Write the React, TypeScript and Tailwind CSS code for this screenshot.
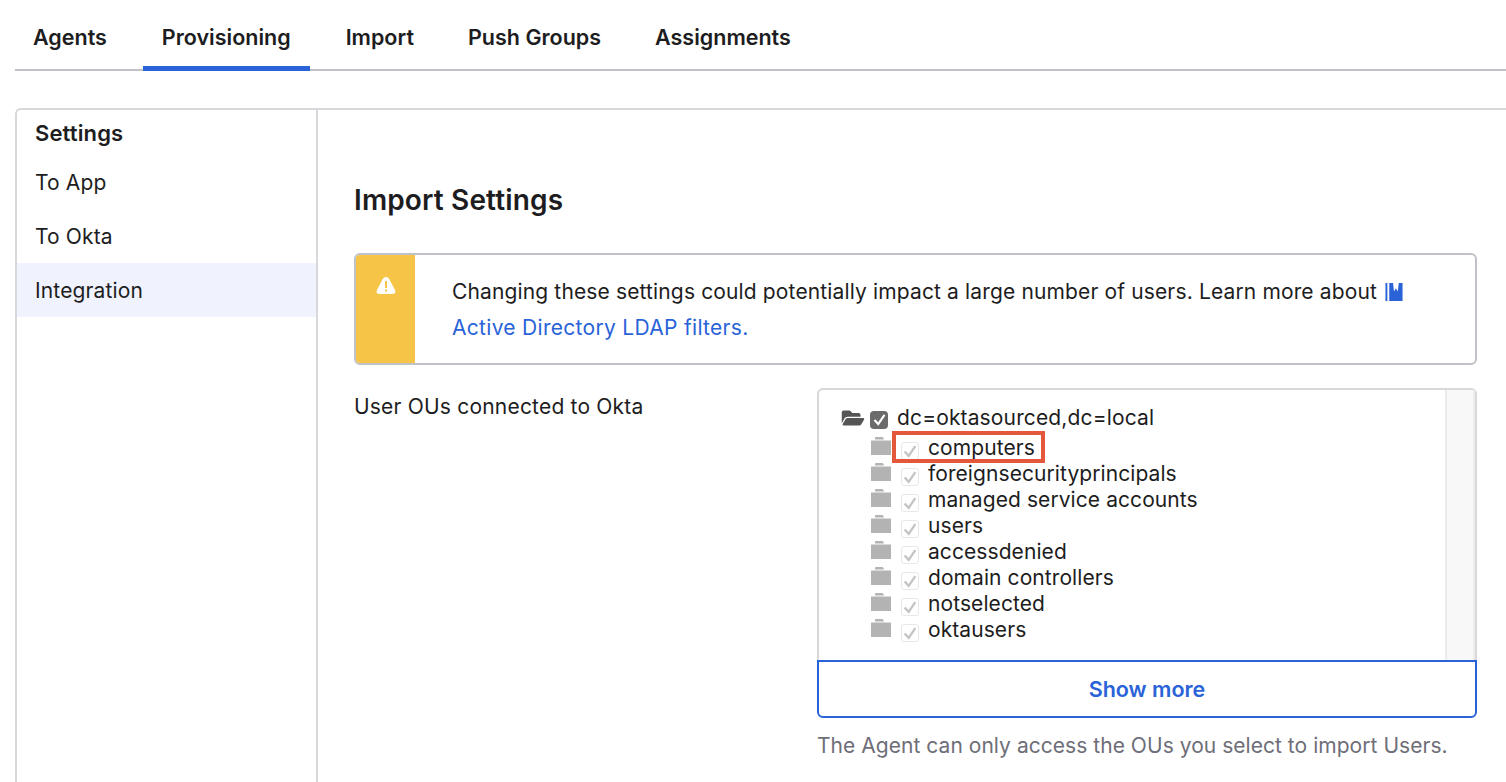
import { FaFolderOpen } from "react-icons/fa";

const tabs = ["Agents", "Provisioning", "Import", "Push Groups", "Assignments"];
const ous = [
  "computers",
  "foreignsecurityprincipals",
  "managed service accounts",
  "users",
  "accessdenied",
  "domain controllers",
  "notselected",
  "oktausers",
];

const Check = ({ className }: { className: string }) => (
  <svg viewBox="0 0 18 18" className={className} fill="none" stroke="currentColor" strokeWidth="2.6">
    <path d="M3 9.5 L7.5 14.5 L15 3.5" />
  </svg>
);

const ClosedFolder = () => (
  <svg viewBox="0 0 20 18" className="w-5 h-[18px] shrink-0" fill="#b3b3b3">
    <path d="M4 1 Q4 0 5 0 H11 Q12 0 12.5 1 L13 2.5 H4 Z" />
    <rect x="0" y="3.5" width="20" height="14.5" />
  </svg>
);

const App = () => {
  return (
    <div className="h-[782px] w-[1506px] overflow-hidden bg-white font-['Inter',sans-serif] text-[21px] tracking-[0.14px] text-[#1d1d21]">
      {/* Tabs */}
      <div className="ml-[15px] flex h-[71px] gap-[18px] border-b-2 border-[#c1c1c8]">
        {tabs.map((tab) => (
          <div
            key={tab}
            className={
              tab === "Provisioning"
                ? "h-[71px] border-b-[5px] border-[#2a63d8] px-[19px] pt-[21px] text-[21.5px] leading-[32px] font-semibold tracking-normal"
                : "h-[71px] px-[18px] pt-[21px] text-[21.5px] leading-[32px] font-semibold tracking-normal"
            }
          >
            {tab}
          </div>
        ))}
      </div>

      {/* Panel */}
      <div className="mt-[37px] ml-[15px] flex h-[700px] rounded-tl-md border-t-2 border-l-2 border-[#d7d7dc]">
        <div className="w-[301px] shrink-0 border-r-2 border-[#d7d7dc]">
          <div className="pt-[9px] pl-[18px] text-[22px] leading-[28px] font-semibold">Settings</div>
          <div className="mt-[8px] flex h-[54px] items-center pt-[1px] pl-[18px]">To App</div>
          <div className="flex h-[54px] items-center pt-[1px] pl-[18px]">To Okta</div>
          <div className="flex h-[54px] items-center bg-[#f0f3fd] pt-[1px] pl-[18px]">Integration</div>
        </div>

        <div className="w-[1123px] shrink-0 pl-[36px]">
          <h2 className="mt-[72px] text-[28px] leading-[36px] font-semibold">Import Settings</h2>

          {/* Warning */}
          <div className="mt-[35px] flex h-[112px] w-[1123px] overflow-hidden rounded-md border-2 border-[#c1c1c8]">
            <div className="flex w-[59px] shrink-0 justify-center bg-[#f6c548] pt-[22px]">
              <svg viewBox="0 0 20 18" className="h-[18px] w-5">
                <path d="M10 0 C12 0 13 1.5 14 3.5 L19 13 C20.2 15.5 19 17 16 17 H4 C1 17 -.2 15.5 1 13 L6 3.5 C7 1.5 8 0 10 0 Z" fill="#fff" />
                <rect x="9" y="4" width="2" height="7" fill="#f6c548" />
                <rect x="9" y="12.5" width="2" height="2" fill="#f6c548" />
              </svg>
            </div>
            <div className="pt-[19px] pl-[37px] leading-[36px]">
              <div className="flex items-center">
                Changing these settings could potentially impact a large number of users. Learn more about
                <svg viewBox="0 0 18 20" className="ml-[8px] h-[19px] w-[18px]" fill="#2a63d8">
                  <rect x="0" y="0" width="2" height="19" />
                  <path d="M4 0 H18 V19 H4 Z M8 0 L9 9 L11 5.5 L13 9 L14 0 Z" fillRule="evenodd" />
                </svg>
              </div>
              <a className="tracking-[0.3px] text-[#2a63d8]">Active Directory LDAP filters.</a>
            </div>
          </div>

          {/* User OUs */}
          <div className="mt-[23px] flex">
            <div className="w-[463px] shrink-0 pt-[5px] leading-[28px] tracking-[0.2px]">User OUs connected to Okta</div>
            <div className="w-[660px] shrink-0">
              <div className="relative flex h-[272px] rounded-t-md border-x-2 border-t-2 border-[#d7d7dc]">
                <div className="flex-1 pt-[15px] pl-[22px]">
                  <div className="flex h-[26px] items-center">
                    <FaFolderOpen className="h-[20px] w-[24px] shrink-0 text-[#555]" />
                    <span className="mt-[3px] ml-[5px] flex h-[18px] w-[18px] shrink-0 items-center justify-center rounded-[4px] bg-[#6b6b6b] text-white">
                      <Check className="h-[15px] w-[15px]" />
                    </span>
                    <span className="ml-[9px]">dc=oktasourced,dc=local</span>
                  </div>
                  <div className="mt-[4px] pl-[30px]">
                    {ous.map((ou) => (
                      <div key={ou} className="flex h-[26px] items-center">
                        <div className="mb-[4px]"><ClosedFolder /></div>
                        <span className="mt-[5px] ml-[10px] flex h-[18px] w-[18px] shrink-0 items-center justify-center rounded-[3px] border border-[#e8e8e8] text-[#c4c4c4]">
                          <Check className="h-[16px] w-[16px]" />
                        </span>
                        <span className="ml-[9px] tracking-[0.08px]">{ou}</span>
                      </div>
                    ))}
                  </div>
                </div>
                <div className="w-[30px] shrink-0 border-x-2 border-[#ececec] bg-[#f8f8f8]" />
                {/* highlight around the first OU */}
                <div className="absolute top-[41px] left-[73px] h-[32px] w-[153px] border-4 border-[#e5573a]" />
              </div>
              <div className="flex h-[58px] items-center justify-center rounded-b-md border-2 border-[#2a63d8] text-[21.5px] font-semibold tracking-normal text-[#2a63d8]">
                Show more
              </div>
              <div className="mt-[14px] leading-[28px] tracking-[0.04px] text-[#6e6e78]">The Agent can only access the OUs you select to import Users.</div>
            </div>
          </div>
        </div>
      </div>
    </div>
  );
};

export default App;
